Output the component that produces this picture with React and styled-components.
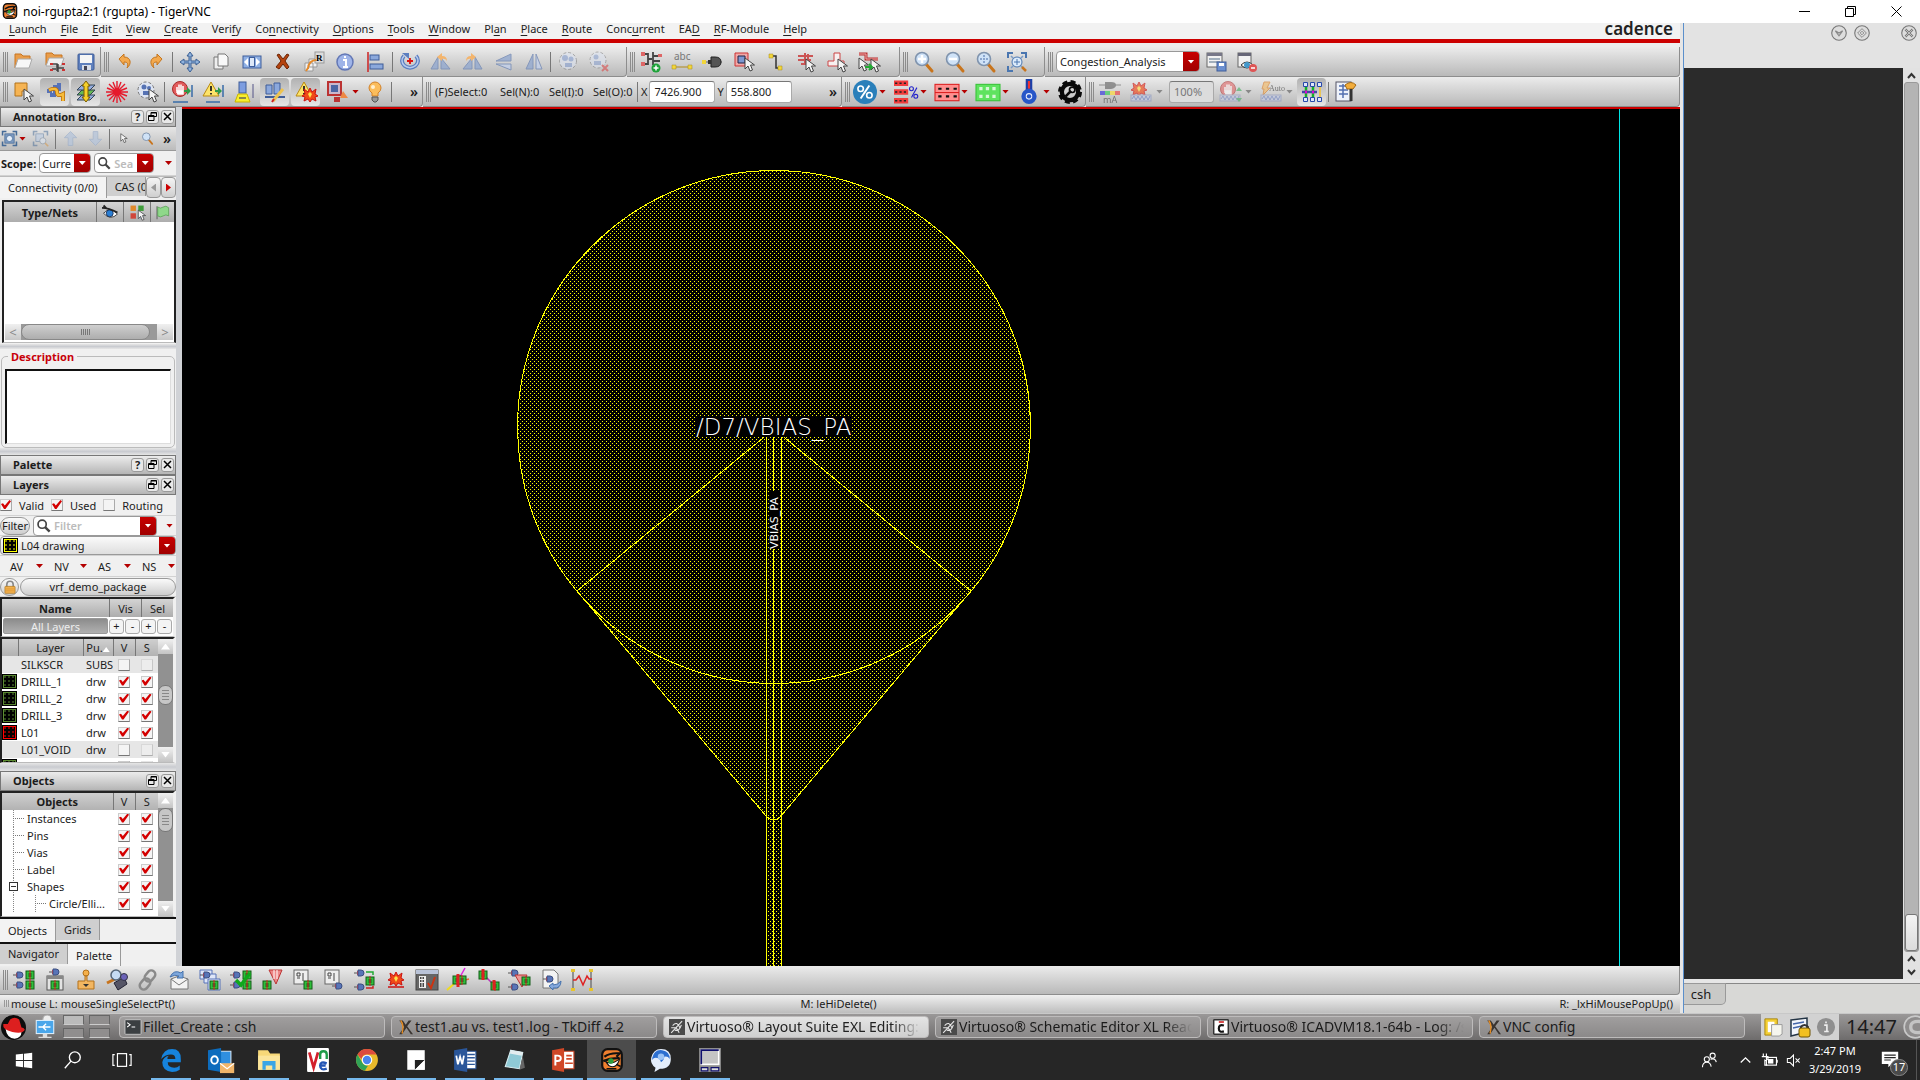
import React from "react";
import styled, { createGlobalStyle, css } from "styled-components";

const Global = createGlobalStyle`
  *, *::before, *::after { box-sizing: border-box; }
  body { margin: 0; background: #262626; }
  body, button, input, select, textarea { font-family: "Noto Sans", "Open Sans", sans-serif; font-size: 11px; color: #1c1c1c; }
  button { margin: 0; padding: 0; border: 0; background: none; white-space: nowrap; }
  input, select, textarea { margin: 0; border-radius: 0; outline: 0; }
  svg { display: block; flex: none; overflow: visible; }
`;

/* ---------- shared icon fragments ---------- */
const Pointer = ({ x = 10, y = 7 }) => (
  <path transform={`translate(${x} ${y})`} d="M0 0v11l3-3 2 5 2.5-1-2-5h4z" fill="#f4f4f4" stroke="#444" strokeWidth="1" />
);
const Lens = ({ children }) => (
  <g>
    <path d="M13 13l6 7" stroke="#c8741c" strokeWidth="3" strokeLinecap="round" />
    <circle cx="9" cy="8" r="6.5" fill="#cfe2f7" stroke="#7f93ad" strokeWidth="1.6" />
    {children}
  </g>
);
const Chip = ({ x, y }) => (
  <g transform={`translate(${x} ${y})`}>
    <rect width="8" height="8" fill="#2fbf3a" stroke="#145c18" />
    <path d="M2.500 3h3M2.500 5h3" stroke="#111" />
    <path d="M4-1v10" stroke="#d22" />
  </g>
);
const Gate = ({ x, y, c = "#5874b8" }) => (
  <g transform={`translate(${x} ${y})`}>
    <path d="M-3 3h10" stroke="#555" />
    <path d="M0 1h2v4H0z" fill="#d44" />
    <path d="M1 0h3a3 3 0 0 1 0 6h-3z" fill={c} stroke="#3c4f80" />
  </g>
);
const Coil = ({ c = "#6d83c4" }) => (
  <g>
    <rect x="1" y="14" width="20" height="6" fill="#c4cce4" stroke="#8d98bd" />
    <path d="M2 18l2-3 2 4 2-4 2 4 2-4 2 4 2-4 2 4 2-4" fill="none" stroke={c} />
  </g>
);
const Hand = () => (
  <g>
    <circle cx="9" cy="8" r="7.500" fill="#e15b5b" stroke="#a82a2a" />
    <path d="M6 12V6M8 10V3.500M10 10V3.500M12 10V5M6 10h6v3H7z" stroke="#fff" strokeWidth="1.500" fill="#fff" />
  </g>
);
const Warn = () => (
  <g>
    <path d="M9 1L1 15h16z" fill="#fde46a" stroke="#b98a12" strokeLinejoin="round" />
    <path d="M9 5v5M9 12v1.500" stroke="#222" strokeWidth="1.800" />
  </g>
);
const Burst = ({ x = 0, y = 0 }) => (
  <g transform={`translate(${x} ${y})`}>
    <path d="M0 0l4 3 2-4 2 4 4-3-1 5 3 2-3 1 1 4-4-2-2 3-2-3-4 2 1-4-3-1 3-2z" fill="#f04a18" stroke="#c11" />
    <path d="M4 5l2-2 2 2-2 4z" fill="#ffe14a" />
  </g>
);
const Tri = ({ d, c = "#93a9cf" }) => <path d={d} fill={c} stroke="#7389b4" strokeLinejoin="round" opacity=".8" />;

const icons = {
  folder: <><path d="M2 17V3h6l2 2h7v3" fill="#e99d4a" stroke="#c87520" /><path d="M5 8h14l-3 9H2z" fill="#f7f7f7" stroke="#aaa" /></>,
  open: <><path d="M2 14V2h6l2 2h8v3" fill="#e99d4a" stroke="#c87520" /><path d="M5 7h15l-3 8H2z" fill="#f0f0f0" stroke="#aaa" /><path d="M8 13h5v7M8 18h4M14 13v8M14 17h6" fill="none" stroke="#444" strokeWidth="1.500" /><path d="M6 12h3v2H6zM6 18h3v2H6zM18 12h3v2h-3zM18 18h3v2h-3z" fill="#c33" /></>,
  save: <><rect x="3" y="3" width="16" height="16" rx="1" fill="#5f80bd" stroke="#3f5d98" /><path d="M5 4h12v8H5z" fill="#f5f5f5" /><path d="M7 14h9v5H7z" fill="#d8dde8" /><path d="M9 15h3v4H9z" fill="#445" /></>,
  undo: <path d="M5 8l5-5v3c7 0 8 7 3 11 2-5 0-6-3-6v3z" fill="#f3a94e" stroke="#c5751d" strokeLinejoin="round" />,
  redo: <path d="M17 8l-5-5v3c-7 0-8 7-3 11-2-5 0-6 3-6v3z" fill="#f3a94e" stroke="#c5751d" strokeLinejoin="round" />,
  move: <path d="M11 1l3 4h-2v5h5V8l4 3-4 3v-2h-5v5h2l-3 4-3-4h2v-5H5v2l-4-3 4-3v2h5V5H8z" fill="#8fb2dc" stroke="#3a5f93" />,
  copy: <><path d="M4 6h9v12H4z" fill="#eee" stroke="#777" /><path d="M8 3h7l3 3v9H8z" fill="#f8f8f8" stroke="#777" /></>,
  stretch: <><rect x="2" y="5" width="18" height="12" fill="#8fb0e4" stroke="#3e5e9c" /><path d="M3 11l4-4v8zM19 11l-4-4v8z" fill="#fff" /><rect x="8.500" y="6.500" width="5" height="9" fill="#dde8f8" stroke="#3e5e9c" /></>,
  cross: <path d="M5 4l2-1 4 5 4-5 2 1-4 6 4 6-2 2-4-5-4 5-3-2 5-6z" fill="#b5430e" stroke="#6b2404" />,
  replace: <><path d="M2 12h8v8H2zM6 8h8v8H6z" fill="#f2f2f2" stroke="#999" /><rect x="12" y="1" width="9" height="11" fill="#ddd" stroke="#999" /><path d="M5 18c0-6 4-9 8-9M3 20l2-3" stroke="#e48a2c" strokeWidth="2" fill="none" /><text x="13" y="10" fontSize="9" fontWeight="700" fontFamily="Liberation Serif, serif">R</text></>,
  info: <><circle cx="11" cy="11" r="8" fill="#9fb4e8" stroke="#6377b5" strokeWidth="1.500" /><path d="M9 9h3v7M9 16h5M11 5v2" stroke="#fff" strokeWidth="2" fill="none" /></>,
  align: <><path d="M3 1v20" stroke="#c22" strokeWidth="1.500" /><rect x="5" y="4" width="9" height="5" fill="#8ba8dc" stroke="#3f5d98" /><rect x="5" y="13" width="13" height="5" fill="#8ba8dc" stroke="#3f5d98" /></>,
  rotate: <><path d="M5 5a8 7 0 1 0 12 0" fill="none" stroke="#5b7ec0" strokeWidth="4" /><path d="M5 5a8 7 0 1 0 12 0" fill="none" stroke="#b7cbee" strokeWidth="1.500" /><path d="M3 2h7v6z" fill="#5b7ec0" /><path d="M11 7v6M8 10h6" stroke="#d11" strokeWidth="1.800" /></>,
  rotl: <><Tri d="M1 18h7V6zM11 18h9L11 7z" /><path d="M7 6l5-4v3q5 0 5 5-2-3-5-2v2z" fill="#f3b56e" /></>,
  rotr: <><Tri d="M21 18h-7V6zM11 18H2l9-11z" /><path d="M15 6l-5-4v3q-5 0-5 5 2-3 5-2v2z" fill="#f3b56e" /></>,
  flip: <><Tri d="M19 3v7H4z" /><Tri d="M19 19v-6H4z" c="#c3d0ea" /></>,
  mirror: <><Tri d="M3 18h7V3z" /><Tri d="M19 18h-6V3z" c="#c3d0ea" /></>,
  group: <g opacity=".55"><circle cx="11" cy="10" r="8.500" fill="#dde4f2" stroke="#777" strokeDasharray="3 2" /><circle cx="8" cy="7" r="3" fill="#7f9ad0" /><circle cx="14" cy="8" r="2.500" fill="#7f9ad0" /><path d="M8 12h7v4H8z" fill="#7f9ad0" /></g>,
  ungroup: <g opacity=".5"><circle cx="10" cy="9" r="8" fill="#dde4f2" stroke="#777" strokeDasharray="3 2" /><circle cx="8" cy="6" r="2.500" fill="#7f9ad0" /><path d="M6 10h7v4H6z" fill="#7f9ad0" /><path d="M14 14l6 6M20 14l-6 6" stroke="#d33" strokeWidth="2" /></g>,
  net: <><path d="M2 3h6v10H2M8 8h4M13 1v13M13 5h7M13 10h7" fill="none" stroke="#444" strokeWidth="1.800" /><path d="M1 1h4v4H1zM1 11h4v4H1zM18 3h4v3h-4z" fill="#d66" /><circle cx="16" cy="17" r="4.500" fill="#1fa33a" /><path d="M16 14.500v5M13.500 17h5" stroke="#fff" strokeWidth="1.500" /></>,
  abc: <><text x="3" y="9" fontSize="10" fill="#777" fontFamily="Noto Sans, sans-serif">abc</text><path d="M3 16h16" stroke="#b08a18" /><path d="M1 14h4v4H1zM17 14h4v4h-4z" fill="#f2d63b" stroke="#a58a1a" strokeWidth=".5" /></>,
  pin: <><path d="M0 11h20" stroke="#666" /><path d="M9 6h4q6 0 6 5t-6 5H9z" fill="#555" stroke="#222" /><path d="M0 9h4v4H0z" fill="#f2d63b" /><path d="M6 9h3v4H6z" fill="#333" /></>,
  selrect: <><path d="M2 2h13v13H2z" fill="#f0a8a8" stroke="#c33" /><path d="M5 5h7v7H5z" fill="#7d97d0" stroke="#224" /><Pointer x={12} y={7} /></>,
  wire: <><path d="M7 5h5v12h4" fill="none" stroke="#333" strokeWidth="1.500" /><path d="M5 3h4v4H5zM14 15h4v4h-4z" fill="#f2d63b" stroke="#a58a1a" strokeWidth=".5" /></>,
  route: <><path d="M3 5h15M3 9h13M10 2v11M13 3v9M6 13h8" stroke="#c55" strokeWidth="2" /><Pointer x={11} y={8} /></>,
  poly: <><path d="M8 2h6v8h4v5H2v-5h6z" fill="#f7f0f0" stroke="#c44" /><Pointer x={12} y={8} /></>,
  chain: <><path d="M2 3h7v5h12" fill="none" stroke="#b33" strokeWidth="3" /><path d="M2 3h7v5h12" fill="none" stroke="#eaa" strokeWidth="1" /><Pointer x={2} y={7} /><Pointer x={14} y={8} /><path d="M8 16h6M12 13l3 3-3 3" stroke="#2a3" strokeWidth="2" fill="none" /></>,
  zin: <Lens><path d="M9 4v8M5 8h8" stroke="#fff" strokeWidth="2.500" /></Lens>,
  zout: <Lens><path d="M5 8h8" stroke="#fff" strokeWidth="2.500" /></Lens>,
  zsel: <Lens><path d="M9 4v8M5 8h8" stroke="#8aa6cf" strokeWidth="2" strokeDasharray="2 1" /></Lens>,
  zfit: <><path d="M2 7V2h5M15 2h5v5M2 15v5h5" fill="none" stroke="#4a76b0" strokeWidth="2" /><path d="M5 5l12 12M17 5L5 17" stroke="#7b9cc6" strokeWidth="1.500" /><circle cx="11" cy="11" r="5" fill="#dcebfb" stroke="#4a76b0" /><path d="M11 8v6M8 11h6" stroke="#4a76b0" /><path d="M16 16l4 4" stroke="#c8741c" strokeWidth="2.500" /></>,
  wsave: <><rect x="2" y="2" width="15" height="14" fill="#f2f2f2" stroke="#666" /><path d="M2 2h15v3H2z" fill="#778" /><path d="M4 8h11M4 11h11" stroke="#8899aa" strokeWidth="1.500" /><rect x="12" y="11" width="9" height="9" fill="#6b8fd0" stroke="#3f5d98" /><path d="M14 12h5v3h-5z" fill="#fff" /></>,
  weye: <><rect x="2" y="2" width="13" height="14" fill="#f2f2f2" stroke="#666" /><path d="M2 2h13v3H2z" fill="#667" /><path d="M5 14q6-6 12 0-6 6-12 0z" fill="#fff" stroke="#333" /><circle cx="11" cy="14" r="3" fill="#49c" /><circle cx="17" cy="17" r="4" fill="#d55" /><path d="M15 17h4" stroke="#fff" strokeWidth="1.500" /></>,
  shape: <><path d="M2 2h12v8h-5v5H2z" fill="#f6b453" stroke="#b2721a" /><Pointer x={11} y={8} /></>,
  path: <><path d="M3 10h5M6 14h6M11 4v8M15 2v8" stroke="#5672b8" strokeWidth="4" /><path d="M5 9q8-3 8 2t6 2v7" fill="none" stroke="#b86d0c" strokeWidth="4" /><path d="M5 9q8-3 8 2t6 2v7" fill="none" stroke="#f7bc3a" strokeWidth="2.500" /></>,
  stack: <><path d="M2 19l5-5h13l-5 5z" fill="#94ace0" stroke="#345" /><path d="M2 14l5-5h13l-5 5z" fill="#64b954" stroke="#345" /><path d="M2 9l5-5h13l-5 5z" fill="#94ace0" stroke="#345" /><path d="M11 0l4 5h-2v11h2l-4 5-4-5h2V5H7z" fill="#f5cf2a" stroke="#7a5d00" /></>,
  star: <path d="M11 0v22M0 11h22M3 3l16 16M19 3L3 19M7 1l8 20M15 1L7 21M1 7l20 8M1 15l20-8" stroke="#e51a2c" strokeWidth="1.400" />,
  selgroup: <><circle cx="9" cy="9" r="8" fill="#dde4f2" stroke="#777" strokeDasharray="3 2" /><circle cx="7" cy="6" r="2.500" fill="#5572b4" /><circle cx="12" cy="7" r="2" fill="#5572b4" /><path d="M6 10h6v4H6z" fill="#5572b4" /><Pointer x={12} y={8} /></>,
  stop: <><Hand /><path d="M21 4v12M2 21h15" stroke="#386ca8" strokeWidth="1.500" /><path d="M20 10l-4-4v3h-3v2h3v3z" fill="#2f9b49" /></>,
  warn: <><Warn /><path d="M21 4v12M4 21h14" stroke="#386ca8" strokeWidth="1.500" /><path d="M20 10l-4-4v3h-3v2h3v3z" fill="#2f9b49" /></>,
  bottle: <><rect x="6" y="1" width="7" height="11" fill="#7d9de0" stroke="#3f5d98" /><path d="M5 13h9l3 8H2z" fill="#f8ef2c" stroke="#c9b300" /><path d="M6 17h7" stroke="#665" strokeWidth="1.500" /><path d="M20 3v14" stroke="#558" /></>,
  edit: <><path d="M2 4h6v9H2zM10 2h6v11h-6z" fill="#8ba8dc" stroke="#3f5d98" /><path d="M1 16h20" stroke="#3f5d98" strokeWidth="2" /><path d="M9 20L19 8" stroke="#eec34e" strokeWidth="3" /><path d="M8 21l2-3" stroke="#c22" strokeWidth="2" /></>,
  warnfire: <><Warn /><Burst x={9} y={8} /></>,
  blocks: <><rect x="2" y="1" width="13" height="13" fill="#c9b8cc" stroke="#b33" strokeWidth="2" /><path d="M5 4h7v7H5z" fill="#4c66a4" /><path d="M8 16h6v5H8z" fill="#b33" /><path d="M17 10l5 7h-8z" fill="#ee8844" /></>,
  bulb: <><path d="M11 1a6 6 0 0 1 6 6q0 3-3 5v3H8v-3Q5 10 5 7a6 6 0 0 1 6-6z" fill="#fbbd5c" stroke="#d2822a" /><circle cx="9" cy="6" r="2" fill="#fff0cf" /><path d="M8 16h6v3l-2 2h-2l-2-2z" fill="#999" stroke="#555" /></>,
  percent: <><circle cx="11" cy="11" r="11" fill="#2a7fba" /><path d="M7 17l8-12" stroke="#fff" strokeWidth="1.800" /><circle cx="7" cy="8" r="2.500" fill="none" stroke="#fff" strokeWidth="1.500" /><circle cx="15" cy="14" r="2.500" fill="none" stroke="#fff" strokeWidth="1.500" /></>,
  rows: <><path d="M0 3h13M0 11h13M0 19h13" stroke="#f23c3c" strokeWidth="5" /><path d="M1 3h12M1 11h12M1 19h12" stroke="#222" strokeWidth="1.500" strokeDasharray="2 2" /><path d="M16 16l5-9" stroke="#22c" /><circle cx="16" cy="8" r="1.800" fill="none" stroke="#22c" /><circle cx="20" cy="15" r="1.800" fill="none" stroke="#22c" /></>,
  redgrid: <><rect x="0" y="4" width="22" height="15" fill="#ff8f8f" stroke="#d22" /><path d="M3 8h18M3 15h18" stroke="#111" strokeWidth="2" strokeDasharray="3 4" /><path d="M0 11.500h22" stroke="#d22" /></>,
  greengrid: <><rect x="0" y="4" width="22" height="15" fill="#5fe35f" stroke="#3ac33a" /><path d="M3 8h18M3 15h18" stroke="#d6f7d6" strokeWidth="3" strokeDasharray="3 3" /></>,
  drop: <><path d="M9 0h4v9H9z" fill="#e33" stroke="#1b3fa8" strokeWidth="2" /><circle cx="11" cy="15" r="5" fill="#e8eefc" stroke="#2756c8" strokeWidth="4" /><circle cx="11" cy="15" r="2" fill="#2756c8" /></>,
  gear: <><circle cx="11" cy="11" r="7.500" fill="none" stroke="#0a0a0a" strokeWidth="4" /><circle cx="11" cy="11" r="9.500" fill="none" stroke="#0a0a0a" strokeWidth="3" strokeDasharray="4.500 3" /><path d="M7 15l5-5" stroke="#0a0a0a" strokeWidth="2.500" /><circle cx="13" cy="9" r="2.500" fill="none" stroke="#0a0a0a" strokeWidth="1.500" /></>,
  ma: <g opacity=".65"><path d="M0 4h22" stroke="#666" /><path d="M6 1h6q5 0 5 3t-5 4H6z" fill="#666" /><path d="M1 10h5v4H1z" fill="#33d" /><path d="M6 10h5v4H6z" fill="#3c5" /><path d="M11 10h5v4h-5z" fill="#fd3" /><path d="M16 10h5v4h-5z" fill="#e44" /><text x="4" y="22" fontSize="9" fill="#444" fontFamily="Noto Sans, sans-serif">mA</text></g>,
  firecoil: <g opacity=".65"><Burst x={3} y={2} /><Coil /></g>,
  stopcoil: <g opacity=".55"><Hand /><Coil /><path d="M20 6l3 4h-6zM20 21l3-4h-6z" fill="#3a5" /></g>,
  auto: <g opacity=".6"><path d="M4 1h6L7 7h3L3 14l1-6H2z" fill="#f5b75c" stroke="#d77b23" /><text x="9" y="10" fontSize="8" fill="#333" fontFamily="Liberation Serif, serif">Auto</text><Coil /></g>,
  tracks: <><path d="M1 11h15" stroke="#44a" strokeWidth="2.500" /><path d="M5 4v14M12 4v14" stroke="#15b02a" strokeWidth="2.500" /><path d="M19 3v16" stroke="#f1c232" strokeWidth="1.500" /><path d="M2.500 1.500h4v4h-4zM9.500 1.500h4v4h-4zM16.500 1.500h4v4h-4zM2.500 16.500h4v4h-4zM9.500 16.500h4v4h-4zM16.500 16.500h4v4h-4z" fill="#dfe6fb" stroke="#2848a8" /><path d="M4 9.500h2v3H4zM11 9.500h2v3h-2z" fill="#d0d" /></>,
  report: <><rect x="1" y="1" width="15" height="19" fill="#eef2fa" stroke="#556" /><path d="M4 5h9M4 9h9M4 13h9M8 3v14" stroke="#5470b0" strokeWidth="1.500" /><path d="M10 4q6-5 11 0l-3 4h-6z" fill="#f2ad3c" stroke="#a66a10" /><path d="M16 8v12" stroke="#333" strokeWidth="3" /></>,
  /* assistant toolbar */
  fit: <><path d="M2 7V2h5M15 2h5v5M2 15v5h5M20 15v5h-5" fill="none" stroke="#456a96" strokeWidth="2" /><rect x="5" y="5" width="12" height="12" fill="#7f9cc2" stroke="#456a96" /><circle cx="11" cy="11" r="4" fill="#e6effa" stroke="#456a96" /></>,
  fitz: <g opacity=".5"><path d="M2 7V2h5M15 2h5v5M2 15v5h5" fill="none" stroke="#456a96" strokeWidth="2" /><rect x="5" y="5" width="10" height="10" fill="#b9cde8" stroke="#456a96" /><circle cx="14" cy="14" r="4" fill="#dfeaf8" stroke="#678" /><path d="M17 17l4 4" stroke="#d9923a" strokeWidth="2" /></g>,
  up: <path d="M11 2l8 8h-5v10H8V10H3z" fill="#b8c6da" stroke="#9caec8" opacity=".8" />,
  down: <path d="M11 20l8-8h-5V2H8v10H3z" fill="#b8c6da" stroke="#9caec8" opacity=".8" />,
  arrow: <Pointer x={7} y={4} />,
  lens: <Lens />,
  eye: <><path d="M2 12q8-9 18 1-9 9-18-1z" fill="#fff" stroke="#222" /><circle cx="10" cy="12" r="4.500" fill="#2b7fd4" stroke="#124" /><path d="M0 5q9 0 20 6M2 2l4 4" stroke="#222" strokeWidth="2.500" fill="none" /></>,
  pick: <><path d="M2 2h7v7H2z" fill="#e0892c" /><path d="M12 2h7v7h-7z" fill="#3f9d3a" /><path d="M2 12h7v7H2z" fill="#d0463a" /><path d="M12 12h7v7h-7z" fill="#9ab" /><Pointer x={12} y={8} /></>,
  flag: <><path d="M3 2v19" stroke="#777" strokeWidth="2" /><path d="M4 3q4 3 8 0t8 1v12q-4-3-8 0t-8 0z" fill="#8fd88a" stroke="#4f9a4b" /></>,
  lock: <><path d="M6 11V7a5 5 0 0 1 10 0v4" fill="none" stroke="#888" strokeWidth="2.500" /><rect x="3" y="10" width="16" height="11" rx="1" fill="#f2b04c" stroke="#a8701a" /><path d="M4 14h14M4 17h14" stroke="#d8902c" /></>,
  find: <><circle cx="9" cy="9" r="6" fill="none" stroke="#444" strokeWidth="2.500" /><path d="M13 13l7 7" stroke="#444" strokeWidth="3.500" /></>,
  /* bottom toolbar */
  place: <><Gate x={3} y={3} /><Gate x={3} y={13} /><Chip x={13} y={2} /><Chip x={13} y={12} /></>,
  window: <><rect x="3" y="7" width="16" height="14" fill="#e3e3e3" stroke="#555" /><path d="M3 7h16v3H3z" fill="#888" /><Gate x={8} y={0} /><Chip x={7} y={12} /></>,
  stamp: <><circle cx="11" cy="4" r="3" fill="#f5b04a" stroke="#b3711a" /><path d="M10 7h2v5h7v8H3v-8h7z" fill="#f2b661" stroke="#b3711a" /><path d="M8 15h6l-3 3z" fill="#333" /></>,
  inspect: <><path d="M8 14l10-6 3 7-9 6z" fill="#556" stroke="#223" /><path d="M1 14l8-4" stroke="#c8741c" strokeWidth="3" /><circle cx="10" cy="6" r="5" fill="#c6dcf3" stroke="#567" strokeWidth="1.500" /><circle cx="18" cy="8" r="3.500" fill="#6b62b8" stroke="#334" /></>,
  link: <g fill="none" stroke="#8a8a8a" strokeWidth="2.500"><rect x="9" y="1" width="8" height="12" rx="4" transform="rotate(40 13 7)" /><rect x="4" y="9" width="8" height="12" rx="4" transform="rotate(40 8 15)" /></g>,
  mail: <><path d="M3 10l8-3 9 3v10H3z" fill="#f3f3f3" stroke="#777" /><path d="M3 10l8 6 9-6" fill="none" stroke="#777" /><path d="M2 8q4-8 11-4l2-2v7H9l2-2q-4-2-9 1z" fill="#7da7dc" stroke="#4672ad" /></>,
  cascade: <><path d="M1 1h12v9H1z" fill="#dfe6f8" stroke="#5672b8" /><path d="M5 5h12v9H5z" fill="#dfe6f8" stroke="#5672b8" /><Gate x={4} y={3} /><path d="M9 10h12v11H9z" fill="#dfe6f8" stroke="#5672b8" /><Chip x={11} y={12} /></>,
  check: <><Gate x={3} y={3} /><Gate x={3} y={13} /><Chip x={13} y={2} /><Chip x={13} y={12} /><path d="M6 11l5 5L20 4" fill="none" stroke="#10a81c" strokeWidth="3.500" /></>,
  cone: <><path d="M8 1h13l-6 14z" fill="#e88" stroke="#b33" /><path d="M13 1v9M16 1v9" stroke="#fff" /><Chip x={2} y={12} /></>,
  sheetA: <><rect x="2" y="1" width="14" height="14" fill="#eee" stroke="#666" /><path d="M5 4h3v3H5zM5 9h3M11 4v8" stroke="#444" fill="none" /><Chip x={12} y={12} /></>,
  sheetB: <><rect x="2" y="1" width="14" height="14" fill="#eee" stroke="#666" /><path d="M5 4h3v3H5zM5 9h3M11 4v8" stroke="#444" fill="none" /><Gate x={12} y={14} /></>,
  swap: <><Gate x={3} y={1} /><Gate x={3} y={15} /><Chip x={12} y={8} /><path d="M12 3h7v3" stroke="#2a3" strokeWidth="1.500" fill="none" /><path d="M12 19h7v-2" stroke="#c22" strokeWidth="1.500" fill="none" /></>,
  fire: <><Burst x={5} y={4} /><path d="M3 18h16" stroke="#c11" strokeWidth="1.500" /></>,
  console: <><rect x="0" y="1" width="22" height="20" fill="#666" stroke="#444" /><path d="M0 1h22v4H0z" fill="#b9c3d8" /><path d="M3 7h7v12H3z" fill="#eee" /><path d="M4 9h5M4 12h5M4 15h5M4 17h5" stroke="#111" strokeWidth="1.500" strokeDasharray="1.500 1" /><path d="M12 14l3 5 4-11" stroke="#c31" strokeWidth="2" fill="none" /></>,
  probeA: <><path d="M0 21l8-7" stroke="#f0dc1e" strokeWidth="2" /><path d="M13 8l5-9" stroke="#d2d" strokeWidth="1.500" /><path d="M14 12l8-2" stroke="#e63" strokeWidth="1.500" /><Chip x={6} y={7} /><Chip x={11} y={7} /><path d="M11 5v13" stroke="#d22" strokeWidth="3" /></>,
  probeB: <><path d="M6 6l11 11" stroke="#b3b" strokeWidth="1.500" /><Chip x={1} y={2} /><path d="M5 0v11" stroke="#d22" strokeWidth="3" /><Chip x={13} y={13} /><path d="M16 11v10" stroke="#d22" strokeWidth="3" /></>,
  coneswap: <><Gate x={2} y={1} /><Gate x={2} y={15} /><path d="M6 6h12l-5 12z" fill="#e99" stroke="#b33" /><Chip x={13} y={8} /></>,
  page: <><path d="M3 1h11l4 4v14H3z" fill="#f3f3f3" stroke="#777" /><Gate x={6} y={7} /><path d="M21 12q0 8-8 7v2l-4-4 4-3v2q5 0 8-4z" fill="#85a9dd" stroke="#4672ad" /></>,
  wave: <><path d="M2 1v20M20 1v20" stroke="#777" strokeWidth="1.500" /><path d="M2 11h3l3-4 4 9 4-9 2 3h3" fill="none" stroke="#d22" strokeWidth="1.500" /><path d="M0 0h4v3H0zM18 0h4v3h-4zM0 19h4v3H0zM18 19h4v3h-4z" fill="#e8c52c" /></>,
  /* desktop and taskbar */
  tiger: <><rect x="2" y="1" width="18" height="20" rx="5" fill="#f07f2e" stroke="#111" strokeWidth="2" /><path d="M4 8q6-4 14-3l-3 3M3 12l6-2 9-1" stroke="#111" strokeWidth="2" fill="none" /><path d="M4 11q5 6 14-1-3 10-10 6z" fill="#fff" stroke="#111" /><circle cx="10" cy="12" r="2.500" fill="#2c9e3c" /><path d="M6 19h9M15 15l4 2" stroke="#111" strokeWidth="1.500" /></>,
  hat: <><circle cx="11" cy="11" r="11" fill="#0c0c0c" /><path d="M4 12q1 8 8 9 6-1 6-6l-6-1z" fill="#fff" /><path d="M2 8q-1 5 8 7t11-2q-1-2-3-2l-2-7q-4-3-8 0l-2 4z" fill="#dd1f1f" /></>,
  monitor: <><circle cx="13" cy="4" r="4" fill="#eee" stroke="#aaa" /><rect x="3" y="5" width="16" height="12" fill="#4aa6ea" stroke="#d9ecfa" /><path d="M5 11h11M9 11l3-3M9 11l3 3" stroke="#fff" strokeWidth="1.200" fill="none" /><path d="M9 17h4v3h4v1H5v-1h4z" fill="#ddd" /></>,
  shell: <><rect x="0" y="1" width="22" height="20" rx="1" fill="#3b3f42" stroke="#ddd" /><path d="M3 5l4 3-4 3M9 11h5" stroke="#fff" fill="none" strokeWidth="1.500" /></>,
  xlogo: <><path d="M3 2l7 9-7 10h4l6-9 6 9h3L14 10l6-8h-4l-4 6-4-6z" fill="#3a3430" /><path d="M5 2q5 6 2 18" stroke="#e28b24" strokeWidth="2" fill="none" /></>,
  chipgray: <><rect width="22" height="22" fill="#4a4a4a" /><path d="M3 19L18 3M5 9q6-7 10 3M8 15q6 3 9-7M3 12h7l4 7" stroke="#e6e6e6" strokeWidth="1.500" fill="none" /></>,
  cbox: <><rect width="22" height="22" rx="2" fill="#333" /><path d="M2 2h18v18H2z" fill="#fff" /><path d="M15 9q-7-2-7 4t7 4" fill="none" stroke="#111" strokeWidth="3" /><path d="M8 4h7" stroke="#c11" strokeWidth="2" /></>,
  clip: <><path d="M2 3h13v17H2z" fill="#f4cf32" stroke="#a78510" /><path d="M5 6h7v11H5z" fill="#fff" /><path d="M9 9h11v10l-3 2H9z" fill="#f6f6ee" stroke="#999" /></>,
  notes: <><path d="M2 4l16-2v14L2 20z" fill="#f2f5fb" stroke="#234" strokeWidth="1.500" /><path d="M4 8l11-2M4 12l9-2" stroke="#46a" strokeWidth="1.500" /><path d="M12 13v-2a4 4 0 0 1 7 0v2" fill="none" stroke="#333" strokeWidth="2" /><rect x="10" y="12" width="11" height="9" rx="2" fill="#f2c022" stroke="#6f5406" /></>,
  infogray: <><circle cx="11" cy="11" r="10" fill="#8f8f8f" /><path d="M9 9h3v7M9 16h5M11 5v2" stroke="#eee" strokeWidth="1.800" fill="none" /></>,
  lower: <><circle cx="11" cy="11" r="10" fill="#ddd" stroke="#777" strokeWidth="1.500" /><path d="M6 8l5 7 5-7-5 3z" fill="none" stroke="#888" strokeWidth="1.500" /></>,
  raise: <><circle cx="11" cy="11" r="10" fill="#ddd" stroke="#777" strokeWidth="1.500" /><path d="M11 5l6 6-6 6-6-6zM11 8.500l2.500 2.500-2.500 2.500L8.500 11z" fill="none" stroke="#888" strokeWidth="1.300" /></>,
  shut: <><circle cx="11" cy="11" r="10" fill="#ddd" stroke="#777" strokeWidth="1.500" /><path d="M6 6l10 10M16 6L6 16" stroke="#777" strokeWidth="3" /><path d="M6 6l10 10M16 6L6 16" stroke="#ddd" strokeWidth="1" /></>,
  cashew: <><circle cx="12" cy="11" r="10" fill="#8f8d8d" stroke="#c9c9c9" strokeWidth="1.500" /><path d="M17 6q-9-1-9 5t9 5" fill="none" stroke="#c4c4c4" strokeWidth="3" /></>,
  win: <path d="M2 5l8-1v7H2zM11 4l9-1v8h-9zM2 12h8v7l-8-1zM11 12h9v8l-9-1z" fill="#fff" />,
  search: <g fill="none" stroke="#fff" strokeWidth="1.500"><circle cx="13" cy="8" r="6" /><path d="M9 12l-7 8" /></g>,
  taskview: <g fill="none" stroke="#fff" strokeWidth="1.300"><rect x="6" y="4" width="10" height="14" /><path d="M3 5H1v12h2M19 5h2v12h-2" /></g>,
  edge: <path d="M2 10Q4 1 12 1q8 0 8 9v3H8q0 5 6 5 3 0 5-2v4q-3 2-7 2-9-1-9-9 1-5 6-6-2 2-1 3h7q0-4-4-4-5 0-9 4z" fill="#1683dc" />,
  outlook: <><path d="M9 3h12v12H9z" fill="#2f8fe0" stroke="#cfe5f8" /><path d="M0 2l12-2v22L0 20z" fill="#0d6cbd" /><ellipse cx="6" cy="11" rx="3" ry="3.500" fill="none" stroke="#fff" strokeWidth="1.800" /><path d="M11 14h13v9H11z" fill="#f0b56a" /><path d="M11 14l6.500 5 6.500-5" fill="none" stroke="#fff" /></>,
  explorer: <><path d="M1 2h9l2 3h9v15H1z" fill="#f7d878" /><path d="M1 7h20v13H1z" fill="#fbe59b" /><path d="M5 20v-8h12v8h-3v-4H8v4z" fill="#3aa5e6" /></>,
  vnc: <><rect x="1" width="20" height="22" rx="1" fill="#fff" /><path d="M3 4l4 14 4-14" fill="none" stroke="#d3202c" strokeWidth="2.500" /><path d="M13 10V6q0-3 3-3t3 3v4" fill="none" stroke="#1f9b48" strokeWidth="2.200" /><path d="M19 14q-6-2-6 2 0 5 6 3M13 16h5" fill="none" stroke="#2456b5" strokeWidth="2.200" /></>,
  chrome: <><circle cx="11" cy="11" r="10" fill="#e8b92b" /><path d="M11 1a10 10 0 0 1 8.700 5H11a5 5 0 0 0-5 4L2.300 6A10 10 0 0 1 11 1z" fill="#dd4b3e" /><path d="M2.300 6L7 14q2 3 5 2l-3 4.800A10 10 0 0 1 2.300 6z" fill="#30a357" /><circle cx="11" cy="11" r="4.800" fill="#fff" /><circle cx="11" cy="11" r="3.800" fill="#4a84ee" /></>,
  sticky: <><path d="M3 2h16v18H3z" fill="#fff" /><path d="M10 20v-9h9z" fill="#222" /><path d="M10 20h9v-9l-9 9z" fill="#fff" /><path d="M10 19v-8h8z" fill="#222" /></>,
  word: <><path d="M11 3h10v16H11z" fill="#fff" stroke="#2a5699" /><path d="M13 6h7M13 9h7M13 12h7M13 15h7" stroke="#2a5699" strokeWidth="1.300" /><path d="M1 2l12-2v22L1 20z" fill="#2a5699" /><path d="M3 7l1.500 8L6.500 8l2 7L10 7" fill="none" stroke="#fff" strokeWidth="1.600" /></>,
  notepad: <><path d="M8 2l11 2-3 15-13-2z" fill="#8fcad6" stroke="#d9eef2" /><path d="M8 2l11 2-1 3L7 5z" fill="#e3edef" /><path d="M16 20l3-13 2 11z" fill="#666" /></>,
  ppt: <><path d="M10 3h11v16H10z" fill="#fff" stroke="#d04727" /><path d="M14 7h5M14 10h5M13 14h7" stroke="#d04727" strokeWidth="1.500" /><path d="M1 2l11-2v22L1 20z" fill="#d04727" /><path d="M4 16V7h2q3 0 3 2.500T6 12H4" fill="none" stroke="#fff" strokeWidth="1.800" /></>,
  bubble: <><path d="M11 1q9 0 9 9t-10 9l-5 3 1-4q-5-3-4-9 2-8 9-8z" fill="#e4eefc" /><path d="M3 9q2-8 9-7 7 1 7 8-2-3-5-2 0 3-3 5-1-4-5-4-2 0-3 2z" fill="#2c6fd0" /><circle cx="11" cy="8" r="3" fill="#9cc4f5" /></>,
  pc: <><rect x="1" y="0" width="20" height="22" fill="#8f8f8f" /><rect x="3" y="2" width="16" height="13" fill="#c4c4c4" stroke="#fff" strokeWidth="1.500" /><path d="M3 15V2h16" fill="none" stroke="#10106c" strokeWidth="1.500" /><path d="M3 18h6v3H3zM12 18h7v3h-7z" fill="#ddd" stroke="#10106c" /></>,
  people: <g fill="none" stroke="#fff" strokeWidth="1.500"><circle cx="8" cy="10" r="3.500" /><path d="M2 21q0-7 6-7 5 0 6 6" /><circle cx="16" cy="5" r="3.500" /><path d="M13 10q7-2 8 4" /></g>,
  chevron: <path d="M4 14l7-7 7 7" fill="none" stroke="#fff" strokeWidth="1.800" />,
  battery: <><rect x="7" y="7" width="13" height="10" fill="none" stroke="#fff" strokeWidth="1.500" /><path d="M9 9h7v6H9z" fill="#fff" /><path d="M21 10v4M3 2v4M7 2v4M1 6h8v3q-3 3-4 2v6h3" stroke="#fff" strokeWidth="1.500" fill="none" /></>,
  mute: <g fill="none" stroke="#fff" strokeWidth="1.500"><path d="M2 8h4l5-5v16l-5-5H2z" /><path d="M14 8l6 6M20 8l-6 6" /></g>,
  action: <><path d="M1 1h20v15h-8l-4 4v-4H1z" fill="#fff" /><path d="M4 5h14M4 8h14M4 11h8" stroke="#262626" strokeWidth="1.500" /></>,
};
const Icon = ({ n, s = 22 }) => (
  <svg width={s} height={s} viewBox="0 0 22 22" aria-hidden="true">{icons[n]}</svg>
);

/* ---------- page frame ---------- */
const Page = styled.div`display: flex; flex-direction: column; min-height: 100vh; overflow: hidden;`;
const TitleBar = styled.header`
  height: 23px; display: flex; align-items: center; gap: 5px; padding: 0 13px 1px 2px; background: #fff; font-size: 12px; color: #000;
`;
const WindowButtons = styled.div`margin-left: auto; display: flex; gap: 24px;`;
const WindowButton = styled.button`width: 22px; height: 20px; display: grid; place-items: center;`;
const Desktop = styled.div`flex: 1; display: flex; min-height: 0;`;
const Editor = styled.main`flex: 1; min-width: 0; display: flex; flex-direction: column; background: #efefef;`;

const MenuBar = styled.nav`
  display: flex; align-items: flex-start; height: 16px; padding: 0 7px 0 9px; background: #f2f2f2;
`;
const MenuItem = styled.button`height: 11px; line-height: 10px; margin-right: 14px; color: #222; u { text-underline-offset: 2px; }`;
const Brand = styled.span`margin-left: auto; font: 600 17px/12px "Noto Sans", sans-serif; color: #222;`;
const RedRule = styled.div`height: 4px; background: #c00;`;
const ToolRow = styled.div`display: flex; height: ${(p) => p.$h}px; background: #ededed; padding-top: ${(p) => p.$top || 0}px;`;
const ToolGroup = styled.div`
  display: flex; align-items: center; padding: 0 0 0 3px; ${(p) => p.$w && css`width: ${p.$w}px;`}
  ${(p) => p.$fill && css`flex: 1;`}
  background: linear-gradient(#ececec, #dcdcdc 30%, #b9b9b9);
  border-right: 1px solid #8d8d8d; border-bottom: 1px solid #8d8d8d; border-radius: 0 0 4px 0;
`;
const Grip = styled.span`
  width: 5px; height: 20px; margin-right: ${(p) => p.$gap || 0}px; flex: none;
  background: repeating-linear-gradient(90deg, #8c8c8c 0 1px, transparent 1px 2px);
`;
const Sep = styled.span`width: 1px; height: 20px; background: #777; margin: 0 1px; flex: none;`;
const ToolButton = styled.button`
  width: ${(p) => p.$w || 31}px; height: 28px; display: grid; place-items: center; flex: none; border-radius: 4px;
  ${(p) => p.$on && css`background: linear-gradient(#b2b2b2, #e6e6e6); width: 29px; margin: 0 1px;`}
`;
const Caret = styled.span`
  width: 7px; height: 4px; flex: none; background: #b40000; clip-path: polygon(0 0, 100% 0, 50% 100%);
  ${(p) => p.$white && css`background: #fff;`}
  ${(p) => p.$mute && css`background: #888; margin-right: 3px;`}
  ${(p) => p.$spaced && css`margin-right: 5px;`}
`;
const More = styled.button`width: 16px; font-size: 14px; line-height: 16px; font-weight: 600; flex: none;`;
const Stat = styled.span`width: ${(p) => p.$w}px; white-space: nowrap; flex: none;`;
const Field = styled.label`display: flex; align-items: center; gap: 2px; margin-left: 2px; flex: none;`;
const Box = styled.input`
  width: ${(p) => p.$w}px; height: 22px; padding: 0 4px; border: 1px solid #a9a9a9; border-top-color: #777;
  border-radius: 3px; background: ${(p) => (p.$dim ? "#dcdcdc" : "#fff")}; ${(p) => p.$dim && css`color: #777; margin-left: 3px;`}
`;
const Push = styled.span`flex: 1;`;

const Combo = styled.div`
  position: relative; display: flex; flex: ${(p) => (p.$w ? "none" : "1")}; width: ${(p) => (p.$w ? p.$w + "px" : "auto")}; min-width: 0;
  height: ${(p) => p.$h || 20}px; align-items: center; background: ${(p) => (p.$plain ? "linear-gradient(#fafafa, #dedede)" : "#fff")};
  border: 1px solid #999; border-radius: 4px; overflow: hidden; padding-left: ${(p) => p.$pad || 2}px; gap: 3px;
  select, input { flex: 1; min-width: 0; width: 0; height: 100%; border: 0; padding: 0; background: none; appearance: none; }
  input::placeholder { color: #bbb; font-weight: 600; opacity: 1; }
`;
const ComboArrow = styled.span`width: 16px; align-self: stretch; display: grid; place-items: center; flex: none; background: linear-gradient(#c80000, #a00000); pointer-events: none;`;

/* ---------- dock ---------- */
const Workspace = styled.div`flex: 1; display: flex; min-height: 0;`;
const Dock = styled.aside`
  width: 182px; flex: none; display: flex; flex-direction: column; padding-right: 6px; background: #f0f0f0;
  box-shadow: inset -6px 0 #d0d2d6; overflow: hidden;
`;
const PanelTitle = styled.h2`
  height: 20px; margin: 0; padding: 0 1px 1px 12px; display: flex; align-items: center; gap: 2px; flex: none;
  font-size: 11px; font-weight: 700; background: linear-gradient(#ececec, #b5b5b5); border: 1px solid #777;
  span { flex: 1; white-space: nowrap; }
`;
const TitleButton = styled.button`
  width: 13px; height: 14px; border: 1px solid #999; border-radius: 3px; background: #e8e8e8; display: grid; place-items: center;
  font-size: 11px; line-height: 10px; font-weight: 700;
`;
const Row = styled.div`display: flex; align-items: center; flex: none; height: ${(p) => p.$h}px; gap: ${(p) => p.$gap || 0}px; padding: 0 ${(p) => p.$px || 0}px; border-bottom: 1px solid #d2d2d2; ${(p) => p.$bar && css`background: linear-gradient(#e6e6e6, #bcbcbc); border-color: #999;`}`;
const Splitter = styled.div`height: ${(p) => p.$h || 8}px; flex: none; background: linear-gradient(#e6e6e6, #c9cbd0 50%, #e6e6e6);`;
const TabRow = styled.div`display: flex; flex: none; height: ${(p) => p.$h}px; border-top: ${(p) => (p.$line ? "2px solid #111" : "1px solid #bbb")}; align-items: flex-start;`;
const Tab = styled.button`
  height: ${(p) => (p.$on ? "100%" : "90%")}; padding: 0 8px; border-right: 1px solid #999; background: ${(p) => (p.$on ? "#f3f3f3" : "#cfcfcf")};
  ${(p) => p.$clip && css`flex: 1; min-width: 0; overflow: hidden; text-align: left;`}
`;
const TabArrow = styled.button`width: 15px; height: 21px; border: 1px solid #999; border-radius: 4px; background: linear-gradient(#f4f4f4, #cfcfcf); display: grid; place-items: center; flex: none;`;
const SideTri = styled.span`width: 5px; height: 8px; background: ${(p) => p.$c}; clip-path: ${(p) => (p.$left ? "polygon(100% 0, 100% 100%, 0 50%)" : "polygon(0 0, 0 100%, 100% 50%)")};`;
const Sunken = styled.div`
  display: flex; flex-direction: column; background: #fff; border: 2px solid #222; border-right-color: ${(p) => (p.$open ? "#f0f0f0" : "#222")}; border-bottom: 1px solid #bbb;
  overflow: hidden; ${(p) => (p.$h ? css`height: ${p.$h}px; flex: none;` : css`flex: 1 1 0; min-height: 80px;`)} margin: ${(p) => p.$m || "0 1px 0 0"};
`;
const Head = styled.div`
  display: grid; grid-template-columns: ${(p) => p.$cols}; height: ${(p) => p.$h || 18}px; flex: none; align-items: center; justify-items: center;
  background: linear-gradient(#d4d4d4, #adadad);
  > * + * { border-left: 1px solid #777; align-self: stretch; justify-self: stretch; display: grid; place-items: center; }
`;
const HScroll = styled.div`height: 16px; margin: auto 1px 2px; flex: none; display: flex; background: #999; align-items: stretch;`;
const ScrollEnd = styled.button`width: 16px; height: 16px; background: linear-gradient(#f0f0f0, #c8c8c8); display: grid; place-items: center; flex: none; color: #888; font-size: 13px; line-height: 14px;`;
const HThumb = styled.div`
  width: 129px; border: 1px solid #888; border-radius: 8px; background: linear-gradient(#cfcfcf, #adadad); display: grid; place-items: center;
  &::after { content: ""; width: 9px; height: 6px; background: repeating-linear-gradient(90deg, #777 0 1px, transparent 1px 2px); }
`;
const Group = styled.fieldset`
  height: 99px; flex: none; margin: 0 1px; padding: 5px 3px 2px; border: 1px solid #bbb; border-radius: 5px;
  legend { margin-left: 3px; padding: 0 3px; color: #c8000a; font-weight: 700; line-height: 15px; }
  textarea { display: block; width: 100%; height: 75px; border: 1px solid #ddd; border-top: 2px solid #111; border-left: 2px solid #111; resize: none; background: #fff; }
`;
const Check = styled.input.attrs({ type: "checkbox" })`
  appearance: none; width: 12px; height: 12px; margin: 0; flex: none; background: #f4f4f4; border: 1px solid #ccc; border-bottom-color: #777; border-right-color: #aaa;
  opacity: ${(p) => (p.$faint ? 0.5 : 1)};
  &:checked::after { content: ""; display: block; width: 10px; height: 9px; background: #d40000; clip-path: polygon(0 45%, 20% 35%, 38% 60%, 85% 0, 100% 15%, 45% 100%, 30% 100%); }
`;
const CheckLabel = styled.label`display: flex; align-items: center; gap: 7px; margin-right: 7px; white-space: nowrap;`;
const Pill = styled.button`
  height: 18px; border: 1px solid #999; border-radius: 9px; background: linear-gradient(#fafafa, #cdcdcd); display: grid; place-items: center;
  flex: ${(p) => (p.$w ? "none" : "1")}; ${(p) => p.$w && css`width: ${p.$w}px;`}
`;
const Filter = styled.button`flex: 1; display: flex; align-items: center; justify-content: space-between; padding: 0 1px 0 10px;`;
const AllLayers = styled.button`background: linear-gradient(#8c8c8c, #b0b0b0); color: #eee; border: 1px solid #999; height: 16px; border-radius: 2px;`;
const Tiny = styled.button`width: 15px; height: 15px; border: 1px solid #aaa; border-radius: 3px; background: #f4f4f4; line-height: 12px;`;
const AllRow = styled.div`display: grid; grid-template-columns: 1fr repeat(4, 15px); gap: 1px; padding: 1px; align-items: center;`;
const ListBody = styled.div`flex: 1; display: flex; min-height: 0;`;
const Table = styled.table`
  flex: 1; border-collapse: collapse; table-layout: fixed; width: 156px; height: max-content;
  th { height: 17px; padding: 0; font-weight: 400; background: linear-gradient(#cfcfcf, #b2b2b2); white-space: nowrap; }
  th + th { border-left: 1px solid #777; }
  td { height: 17px; padding: 0; line-height: 15px; white-space: nowrap; overflow: hidden; }
  td:nth-last-child(-n + 2) input { display: block; margin: 0 auto; }
`;
const SortMark = styled.span`display: inline-block; width: 7px; height: 5px; background: #fff; clip-path: polygon(50% 0, 100% 100%, 0 100%);`;
const Tr = styled.tr`background: ${(p) => (p.$alt ? "#e6e6e6" : "#fff")};`;
const Swatch = styled.span`
  display: block; width: 15px; height: 15px; border: 1px solid #000; box-shadow: inset 0 0 0 1px ${(p) => p.$c}; flex: none;
  background: radial-gradient(${(p) => p.$c} 20%, transparent 30%) 0 0 / 4px 4px #000;
`;
const VScroll = styled.div`width: 15px; flex: none; display: flex; flex-direction: column; background: #919191; justify-content: space-between;`;
const VEnd = styled.button`height: 15px; width: 15px; background: linear-gradient(#f0f0f0, #c4c4c4); display: grid; place-items: center; flex: none;`;
const VTri = styled.span`width: 9px; height: 6px; background: #fff; clip-path: ${(p) => (p.$up ? "polygon(50% 0, 100% 100%, 0 100%)" : "polygon(0 0, 100% 0, 50% 100%)")};`;
const VThumb = styled.div`
  height: ${(p) => p.$h}px; width: 15px; border: 1px solid #777; border-radius: 7px; background: #c6c6c6; display: grid; place-items: center;
  margin-bottom: ${(p) => (p.$top ? "auto" : "12px")};
  &::after { content: ""; width: 7px; height: 10px; background: repeating-linear-gradient(#888 0 1px, transparent 1px 3px); }
`;
const TreeCell = styled.div`
  display: flex; align-items: center; height: 17px; padding-left: ${(p) => (p.$deep ? 33 : 11)}px; gap: 3px;
  background: repeating-linear-gradient(#888 0 1px, transparent 1px 2px) 11px 0 / 1px 100% no-repeat;
  &::before { content: ""; width: 11px; border-top: 1px dotted #777; }
  ${(p) => p.$deep && css`background: repeating-linear-gradient(#888 0 1px, transparent 1px 2px) 11px 0 / 1px 100% no-repeat, repeating-linear-gradient(#888 0 1px, transparent 1px 2px) 33px 0 / 1px 100% no-repeat;`}
  ${(p) => p.$node && css`
    padding-left: 7px; gap: 9px;
    &::before { width: 9px; height: 9px; border: 1px solid #333; background: linear-gradient(#333, #333) center / 5px 1px no-repeat #fff; }
  `}
`;

/* ---------- canvas ---------- */
const CanvasArea = styled.section`
  flex: 1; min-width: 0; min-height: 300px; border-top: 2px solid #c00; background: #000; display: flex;
  svg { width: 100%; height: 100%; overflow: hidden; }
`;

/* ---------- terminal on the right ---------- */
const Terminal = styled.section`width: 240px; flex: none; display: flex; flex-direction: column; background: #e3e3e3; border-left: 3px solid #e6e6e6;`;
const TermFrame = styled.div`flex: 1; display: flex; flex-direction: column; border-left: 1px solid #5b8fcb; min-height: 0;`;
const TermHead = styled.div`height: 45px; display: flex; justify-content: flex-end; align-items: flex-start; padding: 2px 3px 0 0; gap: 7px; flex: none;`;
const RoundButton = styled.button`width: 16px; height: 16px; display: grid; place-items: center; margin-left: ${(p) => p.$gap || 0}px;`;
const TermBody = styled.div`flex: 1; display: flex; background: #2b2b2b; justify-content: flex-end; min-height: 0;`;
const TermScroll = styled.div`width: 17px; background: #e2e2e2; display: flex; flex-direction: column; align-items: center; padding: 1px 0;`;
const Track = styled.div`flex: 1; width: 15px; background: #b4b4b4; border: 1px solid #999; border-radius: 3px; display: flex; align-items: flex-end;`;
const TermThumb = styled.div`width: 13px; height: 37px; border: 1px solid #777; border-radius: 3px; background: linear-gradient(#f4f4f4, #dcdcdc);`;
const Arrow = styled.button`height: 13px; width: 15px; display: grid; place-items: center;`;
const TermTabs = styled.div`height: 34px; flex: none; border-top: 4px solid #e6e6e6; background: #d8d8d6; box-shadow: inset 0 1px #888;`;
const TermTab = styled.button`display: block; height: 22px; width: 42px; padding-right: 7px; font-size: 13px; background: #c9c9c7; border: 1px solid #999; border-left: 0; border-radius: 0 0 5px 0;`;

/* ---------- bars at the bottom ---------- */
const StatusBar = styled.div`
  height: 18px; flex: none; display: grid; grid-template-columns: 1fr auto 1fr; align-items: center; padding: 0 7px 1px 4px; background: linear-gradient(#f0f0f0, #bdbdbd);
  span:last-child { text-align: right; }
`;
const Mouse = styled.span`display: flex; align-items: center; gap: 2px; &::before { content: ""; width: 5px; height: 7px; background: repeating-linear-gradient(90deg, #999 0 1px, transparent 1px 2px); }`;
const Panel = styled.nav`
  height: 27px; flex: none; display: flex; align-items: center; background: linear-gradient(#9a9898, #6e6c6c); border-top: 1px solid #c8c8c8; padding: 0 0 1px 1px; gap: 6px;
`;
const PanelButton = styled.button`width: 25px; height: 24px; display: grid; place-items: center;`;
const Pager = styled.div`display: grid; grid-template-columns: 21px 21px; gap: 3px 5px; margin-right: 3px;`;
const PagerCell = styled.button`height: 10px; border: 1px solid #666; background: ${(p) => (p.$on ? "#bbb" : "#908e8e")}; border-bottom-color: #ccc;`;
const Task = styled.button`
  flex: 0 1 266px; min-width: 0; height: 22px; padding: 0 8px 0 5px; display: flex; align-items: center; gap: 2px; font-size: 14px; overflow: hidden;
  border: 1px solid #bdbbbb; border-radius: 4px; color: ${(p) => (p.$on ? "#222" : "#1b1b1b")};
  background: ${(p) => (p.$on ? "linear-gradient(#e4e4e4, #cfcfcf)" : "linear-gradient(#a09e9e, #8b8989)")};
  span { flex: 1; text-align: left; overflow: hidden; ${(p) => p.$fade && css`mask-image: linear-gradient(90deg, #000 88%, transparent);`} }
`;
const Tray = styled.div`display: flex; align-items: center; margin-left: auto; height: 100%; font-size: 20px; flex: none;`;
const TrayCell = styled.button`width: 26px; height: 26px; background: #d2d2d2; display: grid; place-items: center;`;
const PanelClock = styled.time`padding: 0 5px 0 7px; line-height: 24px;`;
const Cashew = styled.button`width: 18px; height: 24px; overflow: hidden;`;
const Taskbar = styled.nav`height: 40px; flex: none; display: flex; background: #262626; color: #fff;`;
const AppButton = styled.button`
  width: ${(p) => p.$w || 49}px; display: grid; place-items: center; flex: none;
  background: ${(p) => (p.$on ? "#4c4c4c" : "none")};
  ${(p) => p.$run && css`background-image: linear-gradient(#76b9ed, #76b9ed); background-repeat: no-repeat; background-position: 50% 100%; background-size: ${p.$on ? "100%" : "40px"} 2px;`}
`;
const SysTray = styled.div`margin-left: auto; display: flex; align-items: center; padding-right: 3px;`;
const SysButton = styled.button`width: ${(p) => p.$w}px; height: 40px; display: grid; place-items: center;`;
const WinClock = styled.time`width: 58px; text-align: center; font-size: 11px; line-height: 18px; white-space: nowrap;`;
const Notice = styled.button`position: relative; width: 53px; height: 40px; display: grid; place-items: center; border-right: 1px solid #555;`;
const Badge = styled.span`position: absolute; left: 26px; top: 19px; width: 18px; height: 17px; border-radius: 9px; background: #4a4a4a; border: 1px solid #888; color: #fff; font-size: 11px; line-height: 14px;`;

/* ---------- data ---------- */
const menus = [
  ["", "L", "aunch"], ["", "F", "ile"], ["", "E", "dit"], ["", "V", "iew"], ["", "C", "reate"], ["Veri", "f", "y"], ["Co", "n", "nectivity"],
  ["", "O", "ptions"], ["", "T", "ools"], ["", "W", "indow"], ["Pl", "a", "n"], ["", "P", "lace"], ["", "R", "oute"], ["Conc", "u", "rrent"],
  ["EA", "D", ""], ["", "R", "F-Module"], ["", "H", "elp"],
];
const layers = [
  ["", "SILKSCR", "SUBS", false], ["#5b8a32", "DRILL_1", "drw", true], ["#5b8a32", "DRILL_2", "drw", true],
  ["#5b8a32", "DRILL_3", "drw", true], ["#f00", "L01", "drw", true], ["", "L01_VOID", "drw", false], ["#5b8a32", "", "", false],
];
const objects = ["Instances", "Pins", "Vias", "Label", "Shapes", "Circle/Elli..."];
const bottomTools = ["place", "window", "stamp", "inspect", "link", "mail", "cascade", "check", "cone", "sheetA", "sheetB", "swap", "fire", "console", "probeA", "probeB", "coneswap", "page", "wave"];
const tasks = [
  ["shell", "Fillet_Create : csh"], ["xlogo", "test1.au vs. test1.log - TkDiff 4.2"], ["chipgray", "Virtuoso® Layout Suite EXL Editing:", true, true],
  ["chipgray", "Virtuoso® Schematic Editor XL Read", false, true], ["cbox", "Virtuoso® ICADVM18.1-64b - Log: /s", false, true], ["xlogo", "VNC config"],
];
const apps = [
  ["win", 0], ["search", 0], ["taskview", 0], ["edge", 1], ["outlook", 1], ["explorer", 1], ["vnc", 0], ["chrome", 1], ["sticky", 1],
  ["word", 1], ["notepad", 1], ["ppt", 1], ["tiger", 1, 1], ["bubble", 1], ["pc", 1],
];

const Tools = ({ list, s }) =>
  list.map((n, i) => {
    if (n === "|") return <Sep key={i} />;
    const on = n[0] === "*";
    const name = on ? n.slice(1) : n;
    return <ToolButton key={i} $on={on} aria-label={name}><Icon n={name} s={s} /></ToolButton>;
  });

const DropTool = ({ n }) => (
  <>
    <ToolButton $w={29} aria-label={n}><Icon n={n} s={24} /></ToolButton>
    <Caret $spaced />
  </>
);

const FloatIcon = () => (
  <svg width="9" height="9" viewBox="0 0 9 9"><path d="M3 3V.5h5.500v4H6M3 1h5.500M.5 3.500H6v5H.5zM.5 4.500H6" fill="none" stroke="#000" /></svg>
);
const CloseIcon = () => <svg width="9" height="9" viewBox="0 0 9 9"><path d="M1 1l7 7M8 1L1 8" stroke="#000" strokeWidth="1.500" /></svg>;

const PanelHead = ({ title, help }) => (
  <PanelTitle>
    <span>{title}</span>
    {help && <TitleButton aria-label="Help">?</TitleButton>}
    <TitleButton aria-label="Float"><FloatIcon /></TitleButton>
    <TitleButton aria-label="Close"><CloseIcon /></TitleButton>
  </PanelTitle>
);

const VBar = ({ h, top }) => (
  <VScroll>
    <VEnd aria-label="Scroll up"><VTri $up /></VEnd>
    <VThumb $h={h} $top={top} />
    <VEnd aria-label="Scroll down"><VTri /></VEnd>
  </VScroll>
);

const DockPanels = () => (
  <Dock>
    <PanelHead title="Annotation Bro..." help />
    <Row $h={24} $bar>
      <ToolButton $w={19} aria-label="Fit"><Icon n="fit" s={17} /></ToolButton><Caret />
      <ToolButton $w={28} aria-label="Fit selected"><Icon n="fitz" s={17} /></ToolButton><Sep />
      <ToolButton $w={26} aria-label="Up"><Icon n="up" s={17} /></ToolButton>
      <ToolButton $w={25} aria-label="Down"><Icon n="down" s={17} /></ToolButton><Sep />
      <ToolButton $w={24} aria-label="Select"><Icon n="arrow" s={15} /></ToolButton>
      <ToolButton $w={24} aria-label="Zoom"><Icon n="lens" s={13} /></ToolButton>
      <More aria-label="More">»</More>
    </Row>
    <Row $h={25} $gap={3} $px={1}>
      <label htmlFor="scope"><b>Scope:</b></label>
      <Combo $w={52}><select id="scope"><option>Curre</option></select><ComboArrow><Caret $white /></ComboArrow></Combo>
      <Combo $w={60}><Icon n="find" s={14} /><input aria-label="Search" placeholder="Sea" /><ComboArrow><Caret $white /></ComboArrow></Combo>
      <Push /><Caret /><span />
    </Row>
    <TabRow $h={22}>
      <Tab $on>Connectivity (0/0)</Tab><Tab $clip>CAS (0</Tab>
      <TabArrow aria-label="Previous tabs"><SideTri $left $c="#999" /></TabArrow>
      <TabArrow aria-label="Next tabs"><SideTri $c="#c00" /></TabArrow>
    </TabRow>
    <Sunken $h={143} $m="2px 0 1px 2px">
      <Head $h={20} $cols="92px 27px 27px 1fr"><b>Type/Nets</b><span><Icon n="eye" s={17} /></span><span><Icon n="pick" s={17} /></span><span><Icon n="flag" s={15} /></span></Head>
      <HScroll><ScrollEnd aria-label="Scroll left">&lt;</ScrollEnd><HThumb /><Push /><ScrollEnd aria-label="Scroll right">&gt;</ScrollEnd></HScroll>
    </Sunken>
    <Splitter $h={5} />
    <Group><legend>Description</legend><textarea aria-label="Description" /></Group>
    <Splitter $h={7} />
    <PanelHead title="Palette" help />
    <PanelHead title="Layers" />
    <Row $h={21}>
      <CheckLabel><Check defaultChecked />Valid</CheckLabel>
      <CheckLabel><Check defaultChecked />Used</CheckLabel>
      <CheckLabel><Check />Routing</CheckLabel>
    </Row>
    <Row $h={20} $gap={3}>
      <Pill $w={30}>Filter</Pill>
      <Combo $w={124}><Icon n="find" s={15} /><input aria-label="Filter layers" placeholder="Filter" /><ComboArrow><Caret $white /></ComboArrow></Combo>
      <Push /><Caret /><span />
    </Row>
    <Row $h={20}>
      <Combo $plain $h={19}><Swatch $c="#ff0" /><select aria-label="Active layer"><option>L04 drawing</option></select><ComboArrow><Caret $white /></ComboArrow></Combo>
    </Row>
    <Row $h={21}>{["AV", "NV", "AS", "NS"].map((t) => <Filter key={t}>{t}<Caret /></Filter>)}</Row>
    <Row $h={20} $gap={1}><Pill $w={19} aria-label="Lock"><Icon n="lock" s={14} /></Pill><Pill>vrf_demo_package</Pill></Row>
    <Sunken $h={40} $open>
      <Head $cols="1fr 32px 32px"><b>Name</b><span>Vis</span><span>Sel</span></Head>
      <AllRow><AllLayers>All Layers</AllLayers>{["+", "-", "+", "-"].map((t, i) => <Tiny key={i}>{t}</Tiny>)}</AllRow>
    </Sunken>
    <Sunken $open>
      <ListBody>
        <Table>
          <colgroup><col style={{ width: 16 }} /><col style={{ width: 65 }} /><col style={{ width: 30 }} /><col style={{ width: 22 }} /><col /></colgroup>
          <thead><tr><th aria-label="Pattern" /><th>Layer</th><th>Pu.<SortMark /></th><th>V</th><th>S</th></tr></thead>
          <tbody>
            {layers.map(([c, name, use, on], i) => (
              <Tr key={i} $alt={!c}>
                <td>{c && <Swatch $c={c} />}</td><td><span>&nbsp;{name}</span></td><td>&nbsp;{use}</td>
                <td><Check aria-label="Visible" defaultChecked={on} /></td>
                <td><Check aria-label="Selectable" defaultChecked={on} $faint={!on} /></td>
              </Tr>
            ))}
          </tbody>
        </Table>
        <VBar h={20} />
      </ListBody>
    </Sunken>
    <Splitter />
    <PanelHead title="Objects" />
    <Sunken $h={126} $open>
      <ListBody>
        <Table>
          <colgroup><col style={{ width: 111 }} /><col style={{ width: 22 }} /><col /></colgroup>
          <thead><tr><th><b>Objects</b></th><th>V</th><th>S</th></tr></thead>
          <tbody>
            {objects.map((o, i) => (
              <Tr key={o}>
                <td><TreeCell $deep={i === 5} $node={i === 4}>{o}</TreeCell></td>
                <td><Check aria-label={o + " visible"} defaultChecked /></td>
                <td><Check aria-label={o + " selectable"} defaultChecked /></td>
              </Tr>
            ))}
          </tbody>
        </Table>
        <VBar h={24} top />
      </ListBody>
    </Sunken>
    <TabRow $h={25} $line><Tab $on>Objects</Tab><Tab>Grids</Tab></TabRow>
    <TabRow $h={24} $line><Tab>Navigator</Tab><Tab $on>Palette</Tab></TabRow>
  </Dock>
);

const LayoutCanvas = () => (
  <CanvasArea aria-label="Layout canvas">
    <svg shapeRendering="crispEdges">
      <defs>
        <pattern id="dots" width="4" height="4" patternUnits="userSpaceOnUse">
          <path d="M0 0h1v1H0zM2 2h1v1H2z" fill="#ff0" />
        </pattern>
      </defs>
      <path d="M395 482A256.500 256.500 0 1 1 789 482L599 707Q592 715 584 707Z" fill="url(#dots)" />
      <rect x="584" y="700" width="15" height="1300" fill="url(#dots)" />
      <g fill="none" stroke="#ff0" strokeWidth="1">
        <circle cx="592" cy="318" r="256.500" />
        <path d="M395 482L584 707Q592 715 599 707L789 482M395 482L592 320L789 482" />
        <path d="M584.500 320V2000M591.500 320V2000M599.500 320V2000" />
      </g>
      <rect x="513" y="308" width="156" height="20" fill="#000" />
      <rect x="587" y="382" width="11" height="58" fill="#000" />
      <g fill="#fff" fontFamily="DejaVu Sans, sans-serif" shapeRendering="auto">
        <text x="514" y="326" fontSize="23" fontWeight="200">/D7/VBIAS_PA</text>
        <text transform="translate(596 440) rotate(-90)" fontSize="11">VBIAS_PA</text>
      </g>
      <path d="M1437.500 0V2000" stroke="#00e5e5" />
    </svg>
  </CanvasArea>
);

export default function App() {
  return (
    <>
      <Global />
      <Page>
        <TitleBar>
          <Icon n="tiger" s={16} />
          <span>noi-rgupta2:1 (rgupta) - TigerVNC</span>
          <WindowButtons>
            <WindowButton aria-label="Minimize"><svg width="11" height="11"><path d="M0 5.500h11" stroke="#000" /></svg></WindowButton>
            <WindowButton aria-label="Restore"><svg width="11" height="11"><path d="M.5 2.500h8v8h-8zM2.500 2V.5h8v8H9" fill="none" stroke="#000" /></svg></WindowButton>
            <WindowButton aria-label="Close"><svg width="11" height="11"><path d="M.5.5l10 10M10.500.5l-10 10" stroke="#000" /></svg></WindowButton>
          </WindowButtons>
        </TitleBar>
        <Desktop>
          <Editor>
            <MenuBar>
              {menus.map(([a, b, c]) => <MenuItem key={a + b + c}>{a}<u>{b}</u>{c}</MenuItem>)}
              <Brand>cadence</Brand>
            </MenuBar>
            <RedRule />
            <ToolRow $h={34} $top={4}>
              <ToolGroup $w={101}><Grip /><Tools list={["folder", "open", "save"]} /></ToolGroup>
              <ToolGroup $w={526}>
                <Grip /><Tools list={["undo", "redo", "|", "move", "copy", "stretch", "cross", "replace", "info", "align", "|", "rotate", "rotl", "rotr", "flip", "mirror", "|", "group", "ungroup"]} />
              </ToolGroup>
              <ToolGroup $w={273}><Grip /><Tools list={["net", "abc", "pin", "selrect", "wire", "route", "poly", "chain"]} /></ToolGroup>
              <ToolGroup $w={145}><Grip /><Tools list={["zin", "zout", "zsel", "zfit"]} /></ToolGroup>
              <ToolGroup $fill>
                <Grip $gap={3} />
                <Combo $w={144} $h={21} $pad={3}><select aria-label="Workspace"><option>Congestion_Analysis</option></select><ComboArrow><Caret $white /></ComboArrow></Combo>
                <Tools list={["wsave", "weye"]} />
              </ToolGroup>
            </ToolRow>
            <ToolRow $h={30}>
              <ToolGroup $w={423}>
                <Grip /><Tools list={["shape", "*path", "*stack", "star", "selgroup", "|", "stop", "warn", "bottle", "*edit", "*warnfire", "blocks"]} />
                <Caret /><ToolButton aria-label="Hints"><Icon n="bulb" /></ToolButton><Sep /><Push /><More aria-label="More">»</More>
              </ToolGroup>
              <ToolGroup $w={419}>
                <Grip $gap={4} /><Stat $w={65}>(F)Select:0</Stat><Stat $w={49}>Sel(N):0</Stat><Stat $w={44}>Sel(I):0</Stat><Stat $w={43}>Sel(O):0</Stat><Sep />
                <Field>X<Box $w={66} defaultValue="7426.900" /></Field><Field>Y<Box $w={66} defaultValue="558.800" /></Field><Push /><More aria-label="More">»</More>
              </ToolGroup>
              <ToolGroup $w={244}>
                <Grip />{["percent", "rows", "redgrid", "greengrid", "drop"].map((n) => <DropTool key={n} n={n} />)}
                <ToolButton $w={29} aria-label="Settings"><Icon n="gear" s={24} /></ToolButton>
              </ToolGroup>
              <ToolGroup $fill>
                <Grip /><Tools list={["ma", "firecoil"]} /><Caret $mute /><Box $w={45} $dim aria-label="Scale" defaultValue="100%" />
                <ToolButton aria-label="Stop"><Icon n="stopcoil" /></ToolButton><Caret $mute />
                <ToolButton aria-label="Auto"><Icon n="auto" /></ToolButton><Caret $mute />
                <Tools list={["*tracks", "|", "report"]} />
              </ToolGroup>
            </ToolRow>
            <Workspace>
              <DockPanels />
              <LayoutCanvas />
            </Workspace>
            <ToolRow $h={29}><ToolGroup $fill><Grip /><Tools list={bottomTools} /></ToolGroup></ToolRow>
            <StatusBar><Mouse>mouse L: mouseSingleSelectPt()</Mouse><span>M: leHiDelete()</span><span>R: _lxHiMousePopUp()</span></StatusBar>
          </Editor>
          <Terminal>
            <TermFrame>
              <TermHead>
                <RoundButton aria-label="Lower"><Icon n="lower" s={16} /></RoundButton>
                <RoundButton aria-label="Raise"><Icon n="raise" s={16} /></RoundButton>
                <RoundButton $gap={24} aria-label="Close"><Icon n="shut" s={16} /></RoundButton>
              </TermHead>
              <TermBody>
                <TermScroll>
                  <Arrow aria-label="Up"><svg width="9" height="6"><path d="M1 5l3.500-4L8 5" fill="none" stroke="#333" strokeWidth="2" /></svg></Arrow>
                  <Track><TermThumb /></Track>
                  <Arrow aria-label="Line up"><svg width="9" height="6"><path d="M1 5l3.500-4L8 5" fill="none" stroke="#333" strokeWidth="2" /></svg></Arrow>
                  <Arrow aria-label="Line down"><svg width="9" height="6"><path d="M1 1l3.500 4L8 1" fill="none" stroke="#333" strokeWidth="2" /></svg></Arrow>
                </TermScroll>
              </TermBody>
              <TermTabs><TermTab>csh</TermTab></TermTabs>
            </TermFrame>
          </Terminal>
        </Desktop>
        <Panel>
          <PanelButton aria-label="Applications"><Icon n="hat" s={25} /></PanelButton>
          <PanelButton aria-label="Devices"><Icon n="monitor" s={24} /></PanelButton>
          <Pager>{[1, 2, 3, 4].map((n) => <PagerCell key={n} $on={n === 1} aria-label={"Desktop " + n} />)}</Pager>
          {tasks.map(([n, t, on, fade]) => <Task key={t} $on={on} $fade={fade}><Icon n={n} s={16} /><span>{t}</span></Task>)}
          <Tray>
            <TrayCell aria-label="Clipboard"><Icon n="clip" s={21} /></TrayCell>
            <TrayCell aria-label="Updates"><Icon n="notes" s={22} /></TrayCell>
            <TrayCell aria-label="Notifications"><Icon n="infogray" s={20} /></TrayCell>
            <PanelClock>14:47</PanelClock>
            <Cashew aria-label="Panel tools"><Icon n="cashew" s={24} /></Cashew>
          </Tray>
        </Panel>
        <Taskbar>
          {apps.map(([n, run, on], i) => <AppButton key={n} $w={i === 0 ? 48 : 49} $run={!!run} $on={!!on} aria-label={n}><Icon n={n} s={i < 3 ? 20 : 24} /></AppButton>)}
          <SysTray>
            <SysButton $w={46} aria-label="People"><Icon n="people" s={16} /></SysButton>
            <SysButton $w={26} aria-label="Hidden icons"><Icon n="chevron" s={15} /></SysButton>
            <SysButton $w={22} aria-label="Battery"><Icon n="battery" s={17} /></SysButton>
            <SysButton $w={26} aria-label="Volume"><Icon n="mute" s={15} /></SysButton>
            <WinClock>2:47 PM<br />3/29/2019</WinClock>
            <Notice aria-label="Action center"><Icon n="action" s={18} /><Badge>17</Badge></Notice>
          </SysTray>
        </Taskbar>
      </Page>
    </>
  );
}
